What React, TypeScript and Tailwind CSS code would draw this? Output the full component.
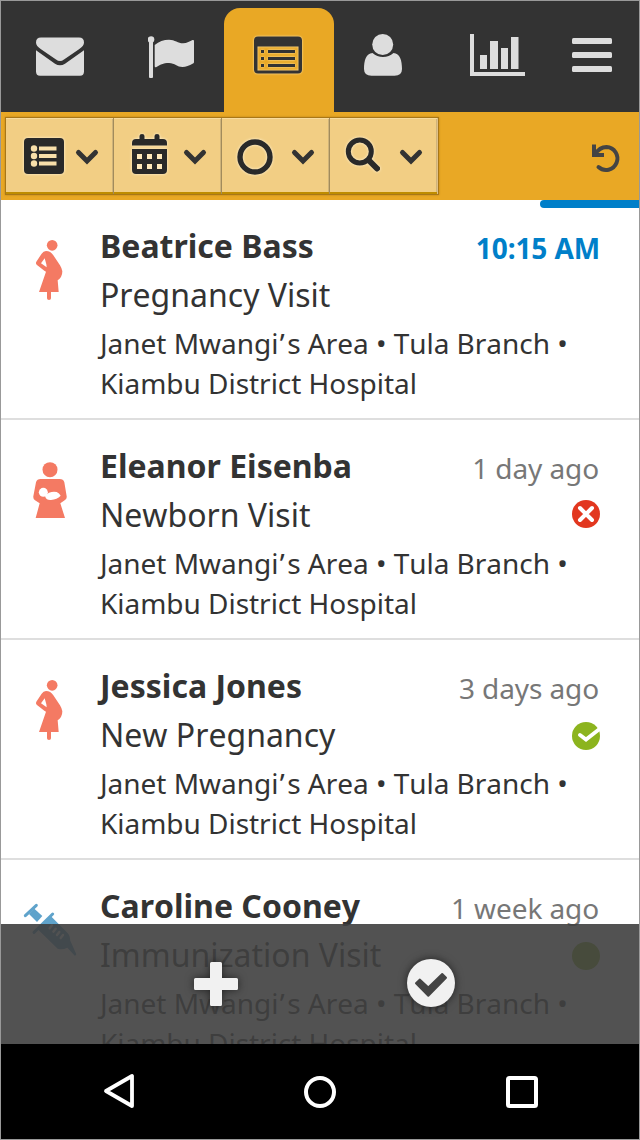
import type { ReactNode } from "react";

type Kind = "pregnancy" | "newborn" | "immunization";
type Status = "none" | "missed" | "done" | "plain";

interface Visit {
  name: string;
  visit: string;
  when: string;
  due?: boolean;
  kind: Kind;
  status: Status;
}

const visits: Visit[] = [
  { name: "Beatrice Bass", visit: "Pregnancy Visit", when: "10:15 AM", due: true, kind: "pregnancy", status: "none" },
  { name: "Eleanor Eisenba", visit: "Newborn Visit", when: "1 day ago", kind: "newborn", status: "missed" },
  { name: "Jessica Jones", visit: "New Pregnancy", when: "3 days ago", kind: "pregnancy", status: "done" },
  { name: "Caroline Cooney", visit: "Immunization Visit", when: "1 week ago", kind: "immunization", status: "plain" },
];

function KindIcon({ kind }: { kind: Kind }) {
  return (
    <svg className="h-[100px] w-[100px] shrink-0" viewBox="0 -60 300 300">
      {kind === "pregnancy" && (
        <g fill="#f47a63">
          <circle cx="156.500" cy="76" r="16" />
          <path
            fillRule="evenodd"
            d="M138 93Q130 93 125 101L109 125Q106 130 110 134L134 153L138 155L117 216H141V235Q141 240 147 240T153 235V216H176L173 181Q187 172 187 154Q186 146 180 136L160 106Q152 93 138 93ZM134 115L123 130L140 142L139 133Z"
          />
        </g>
      )}
      {kind === "newborn" && (
        <g>
          <g fill="#f47a63">
            <circle cx="150" cy="89" r="22.500" />
            <path d="M122 117H179Q190 117 193 127L200 169Q201 176 195 180L181 190L195 234H107L119 190L105 181Q99 177 100 169L108 127Q111 117 122 117Z" />
          </g>
          <g fill="#fff">
            <circle cx="130" cy="157" r="13.500" />
            <path d="M134 163Q141 164 147 158Q160 153 170 156Q178 159 182 167Q171 178 153 180Q139 181 136 171Z" />
          </g>
        </g>
      )}
      {kind === "immunization" && (
        <g>
          <g stroke="#5fa3cb" strokeWidth="9" strokeLinecap="round">
            <path d="M76 107L109 76M102 157L158 102" />
          </g>
          <g fill="#5fa3cb">
            <path d="M87 102L103 86L127 108L111 126Z" />
            <path d="M113 148L153 109L202 158Q210 166 211 182L229 223L225 228L202 203Q186 211 173 206Z" />
          </g>
          <g stroke="#fff" strokeWidth="7" strokeLinecap="round">
            <path d="M149 145L156 136M160 155L167 146M171 165L178 156M182 174L189 165" />
          </g>
        </g>
      )}
    </svg>
  );
}

function StatusIcon({ status }: { status: Status }) {
  if (status === "none") return null;
  return (
    <svg className={status === "missed" ? "h-7 w-7" : "mt-1 h-7 w-7"} viewBox="0 0 28 28">
      <circle cx="14" cy="14" r="14" fill={status === "missed" ? "#e2371f" : "#8cb41e"} />
      {status === "missed" && (
        <path d="M8 8L20 20M20 8L8 20" stroke="#fff" strokeWidth="4" strokeLinecap="round" />
      )}
      {status === "done" && (
        <path d="M8 13L14 17.500L27.500 7" fill="none" stroke="#fff" strokeWidth="3.800" strokeLinecap="round" />
      )}
    </svg>
  );
}

function VisitRow({ item }: { item: Visit }) {
  return (
    <li className="flex h-[220px] shrink-0 border-b-2 border-[#dedede] pr-10 [font-kerning:none]">
      <KindIcon kind={item.kind} />
      <div className="min-w-0 flex-1 pt-[22px] text-[#333]">
        <div className="flex h-12 justify-between whitespace-nowrap">
          <h2 className="text-[32px] leading-[48px] font-bold">{item.name}</h2>
          <span
            className={
              item.due
                ? "pt-1 text-[28px] leading-[45px] font-bold tracking-[-0.1px] text-[#007fc9]"
                : "pt-1 pr-px text-[28px] leading-[44px] tracking-[-0.1px] text-[#777]"
            }
          >
            {item.when}
          </span>
        </div>
        <div className="flex h-12 items-center justify-between">
          <p className="pt-px text-[32px] leading-[49px]">{item.visit}</p>
          <StatusIcon status={item.status} />
        </div>
        <p className="mt-[5px] text-[28px] leading-10 tracking-[-0.03px] whitespace-nowrap">
          Janet Mwangi<span className="mr-[2.5px] ml-[1.5px]">’</span>s Area • Tula Branch •<br />
          Kiambu District Hospital
        </p>
      </div>
    </li>
  );
}

function FilterButton({ children }: { children: ReactNode }) {
  return (
    <button className="flex h-full w-[108px] items-center gap-2 border-r border-[#a28b5c] bg-[#f2ce84] pl-4 shadow-[inset_0_-2px_0_#bf8c00,inset_0_1px_0_#f9dc9e,inset_-1px_0_0_#cfb37a] last:border-[#dfc08a]">
      {children}
      <svg className="h-12 w-[26px] shrink-0" viewBox="74 132 26 48" fill="none">
        <path d="M78.500 152.500L87 161L95.500 152.500" stroke="#333" strokeWidth="5" strokeLinecap="round" />
      </svg>
    </button>
  );
}

const glow = "h-12 w-11 shrink-0 overflow-visible drop-shadow-[0_0_1.5px_#fff4d8]";

export default function App() {
  return (
    <main className="relative flex h-[1140px] w-[640px] flex-col overflow-hidden bg-white font-['Noto_Sans',sans-serif]">
      <header className="flex h-28 shrink-0 items-end bg-[#333]">
        <button className="flex h-28 w-[120px] items-center justify-center">
          <svg className="h-12 w-12" viewBox="36 32 48 48" fill="#ddd">
            <path d="M41 37.500H79Q84 37.500 84 42.500Q84 46 79 49.200L64 59.500Q60 62.500 56 59.500L41 49.200Q36 46 36 42.500Q36 37.500 41 37.500Z" />
            <path d="M36 50.200L55 63.700Q60 67 65 63.700L84 50.200V71.500Q84 75.700 80 75.700H40Q36 75.700 36 71.500Z" />
          </svg>
        </button>
        <button className="flex h-28 w-[104px] items-center justify-center">
          <svg className="h-12 w-12" viewBox="148 32 48 48" fill="#ddd">
            <circle cx="151" cy="39.500" r="3.300" />
            <rect x="149" y="41" width="4" height="37" rx="1" />
            <path d="M154.700 45Q161 39.700 169 39.700C175 39.700 178 43.300 183 43.300C187 43.300 190 41 192.500 40Q194 39.500 194 41V62Q194 63 193 63.600C189 66 186 67 182.500 67C177 67 175 63 169 63C163 63 160 65 156.500 67Q154.700 68 154.700 66Z" />
          </svg>
        </button>
        <button className="flex h-[104px] w-[110px] items-start justify-center rounded-t-2xl bg-[#e9a825] pt-6">
          <svg className="h-12 w-[50px] overflow-visible drop-shadow-[0_0_1px_#ffe6b0]" viewBox="254 32 50 48">
            <path
              fill="#333"
              fillRule="evenodd"
              d="M258 36.500H298Q302 36.500 302 40.500V69.500Q302 73.500 298 73.500H258Q254 73.500 254 69.500V40.500Q254 36.500 258 36.500ZM257.500 46.500V70.500H298.500V46.500Z"
            />
            <g stroke="#333" strokeWidth="3.200">
              <path d="M261 51.500H264M261 58.500H264M261 65.500H264M268 51.500H295M268 58.500H295M268 65.500H295" />
            </g>
          </svg>
        </button>
        <button className="flex h-28 w-[98px] items-center justify-center">
          <svg className="h-12 w-10" viewBox="363 32 40 48" fill="#ddd">
            <circle cx="382.700" cy="44.500" r="10.500" />
            <path d="M372.500 53Q377 57 383 57T393.500 53C400 53.500 402 60.500 402 69Q402 75.700 394.500 75.700H371.500Q364 75.700 364 69C364 60.500 366 53.500 372.500 53Z" />
          </svg>
        </button>
        <button className="flex h-28 w-[130px] items-center justify-center">
          <svg className="h-12 w-14" viewBox="469 32 56 48" fill="#ddd">
            <path d="M470 34H474V72H525V76H470ZM480 55H487V69H480ZM490 41H498V69H490ZM501 48H508V69H501ZM511 37H518.500V69H511Z" />
          </svg>
        </button>
        <button className="flex h-28 w-[60px] items-center justify-center">
          <svg className="h-12 w-10" viewBox="572 32 40 48" fill="#ddd">
            <rect x="572" y="38" width="40" height="6" rx="1.500" />
            <rect x="572" y="52" width="40" height="6" rx="1.500" />
            <rect x="572" y="66" width="40" height="6" rx="1.500" />
          </svg>
        </button>
      </header>

      <nav className="flex h-[88px] shrink-0 items-center justify-between bg-[#e9a825] pr-[18px] pl-[6px]">
        <div className="flex h-[76px] shadow-[0_0_0_1px_#a87718,0_0_2px_1px_#b98018]">
          <FilterButton>
            <svg className={glow} viewBox="22 132 44 48">
              <rect x="24" y="138" width="40" height="36" rx="4" fill="#292929" />
              <g fill="#f8dfaa">
                <circle cx="34" cy="148.500" r="3.200" />
                <circle cx="34" cy="156" r="3.200" />
                <circle cx="34" cy="163.500" r="3.200" />
                <path d="M39 146.500H56.500V150.500H39ZM39 154H56.500V158H39ZM39 161.500H56.500V165.500H39Z" />
              </g>
            </svg>
          </FilterButton>
          <FilterButton>
            <svg className={glow} viewBox="130 132 44 48">
              <path
                fill="#292929"
                d="M132 145.500V143Q132 139 136 139H139.500V136Q139.500 134 142 134T144.500 136V139H154.500V136Q154.500 134 157 134T159.500 136V139H163Q167 139 167 143V145.500ZM132 149H167V170Q167 174 163 174H136Q132 174 132 170Z"
              />
              <path
                fill="#ffe9bb"
                d="M137 154H142V159H137ZM147 154H152V159H147ZM157 154H162V159H157ZM137 164H142V169H137ZM147 164H152V169H147ZM157 164H162V169H157Z"
              />
            </svg>
          </FilterButton>
          <FilterButton>
            <svg className={glow} viewBox="238 132 44 48">
              <circle cx="255" cy="157" r="15" fill="none" stroke="#292929" strokeWidth="5.400" />
            </svg>
          </FilterButton>
          <FilterButton>
            <svg className={glow} viewBox="346 132 44 48" fill="none" stroke="#292929">
              <circle cx="359.800" cy="151.500" r="11.500" strokeWidth="5" />
              <path d="M369 160.500L377 168.500" strokeWidth="6" strokeLinecap="round" />
            </svg>
          </FilterButton>
        </div>
        <svg className="h-12 w-8" viewBox="590 132 32 48" fill="none" stroke="#444" strokeWidth="4">
          <path d="M594 144.500V155H604" />
          <path d="M595 154.500C598 149.500 602 147 606.500 147A11.300 11.500 0 1 1 598.500 167" strokeLinecap="round" />
        </svg>
      </nav>

      <section className="relative h-[844px] shrink-0 overflow-hidden">
        <ul className="flex flex-col">
          {visits.map((item) => (
            <VisitRow key={item.name} item={item} />
          ))}
        </ul>
        <div className="absolute top-0 right-0 h-2 w-[100px] rounded-l-full bg-[#007fc9]" />
        <div className="absolute inset-x-0 bottom-0 flex h-[120px] items-center gap-[167px] bg-[#3f3f3f]/90 pl-48">
          <svg className="h-12 w-12 overflow-visible drop-shadow-[0_0_4px_#222]" viewBox="0 0 48 48" fill="#f1f1f1">
            <path d="M19.500 2H28.500Q30 2 30 3.500V18H44.500Q46 18 46 19.500V28.500Q46 30 44.500 30H30V44.500Q30 46 28.500 46H19.500Q18 46 18 44.500V30H3.500Q2 30 2 28.500V19.500Q2 18 3.500 18H18V3.500Q18 2 19.500 2Z" />
          </svg>
          <svg className="h-12 w-12 -translate-y-px overflow-visible drop-shadow-[0_0_4px_#222]" viewBox="0 0 48 48">
            <circle cx="24" cy="24" r="24" fill="#f1f1f1" />
            <path
              d="M9 24.300L12.700 20.600L21.300 28.500L35.200 15L39 18.800L21.300 36.700Z"
              fill="#444"
              stroke="#444"
              strokeWidth="2"
              strokeLinejoin="round"
            />
          </svg>
        </div>
      </section>

      <footer className="flex h-24 shrink-0 items-center bg-black pl-[103px]">
        <svg className="h-10 w-8" viewBox="103 1072 32 40" fill="none" stroke="#fff" strokeWidth="3.800" strokeLinejoin="round">
          <path d="M106 1091L132 1076V1106Z" />
        </svg>
        <svg className="ml-[169px] h-10 w-8" viewBox="304 1072 32 40" fill="none" stroke="#fff" strokeWidth="4">
          <circle cx="320" cy="1092" r="14" />
        </svg>
        <svg className="ml-[170px] h-10 w-8" viewBox="506 1072 32 40" fill="none" stroke="#fff" strokeWidth="4">
          <rect x="508" y="1078" width="28" height="28" rx="1.500" />
        </svg>
      </footer>
      <div className="pointer-events-none absolute inset-0 border border-[#999]" />
    </main>
  );
}
